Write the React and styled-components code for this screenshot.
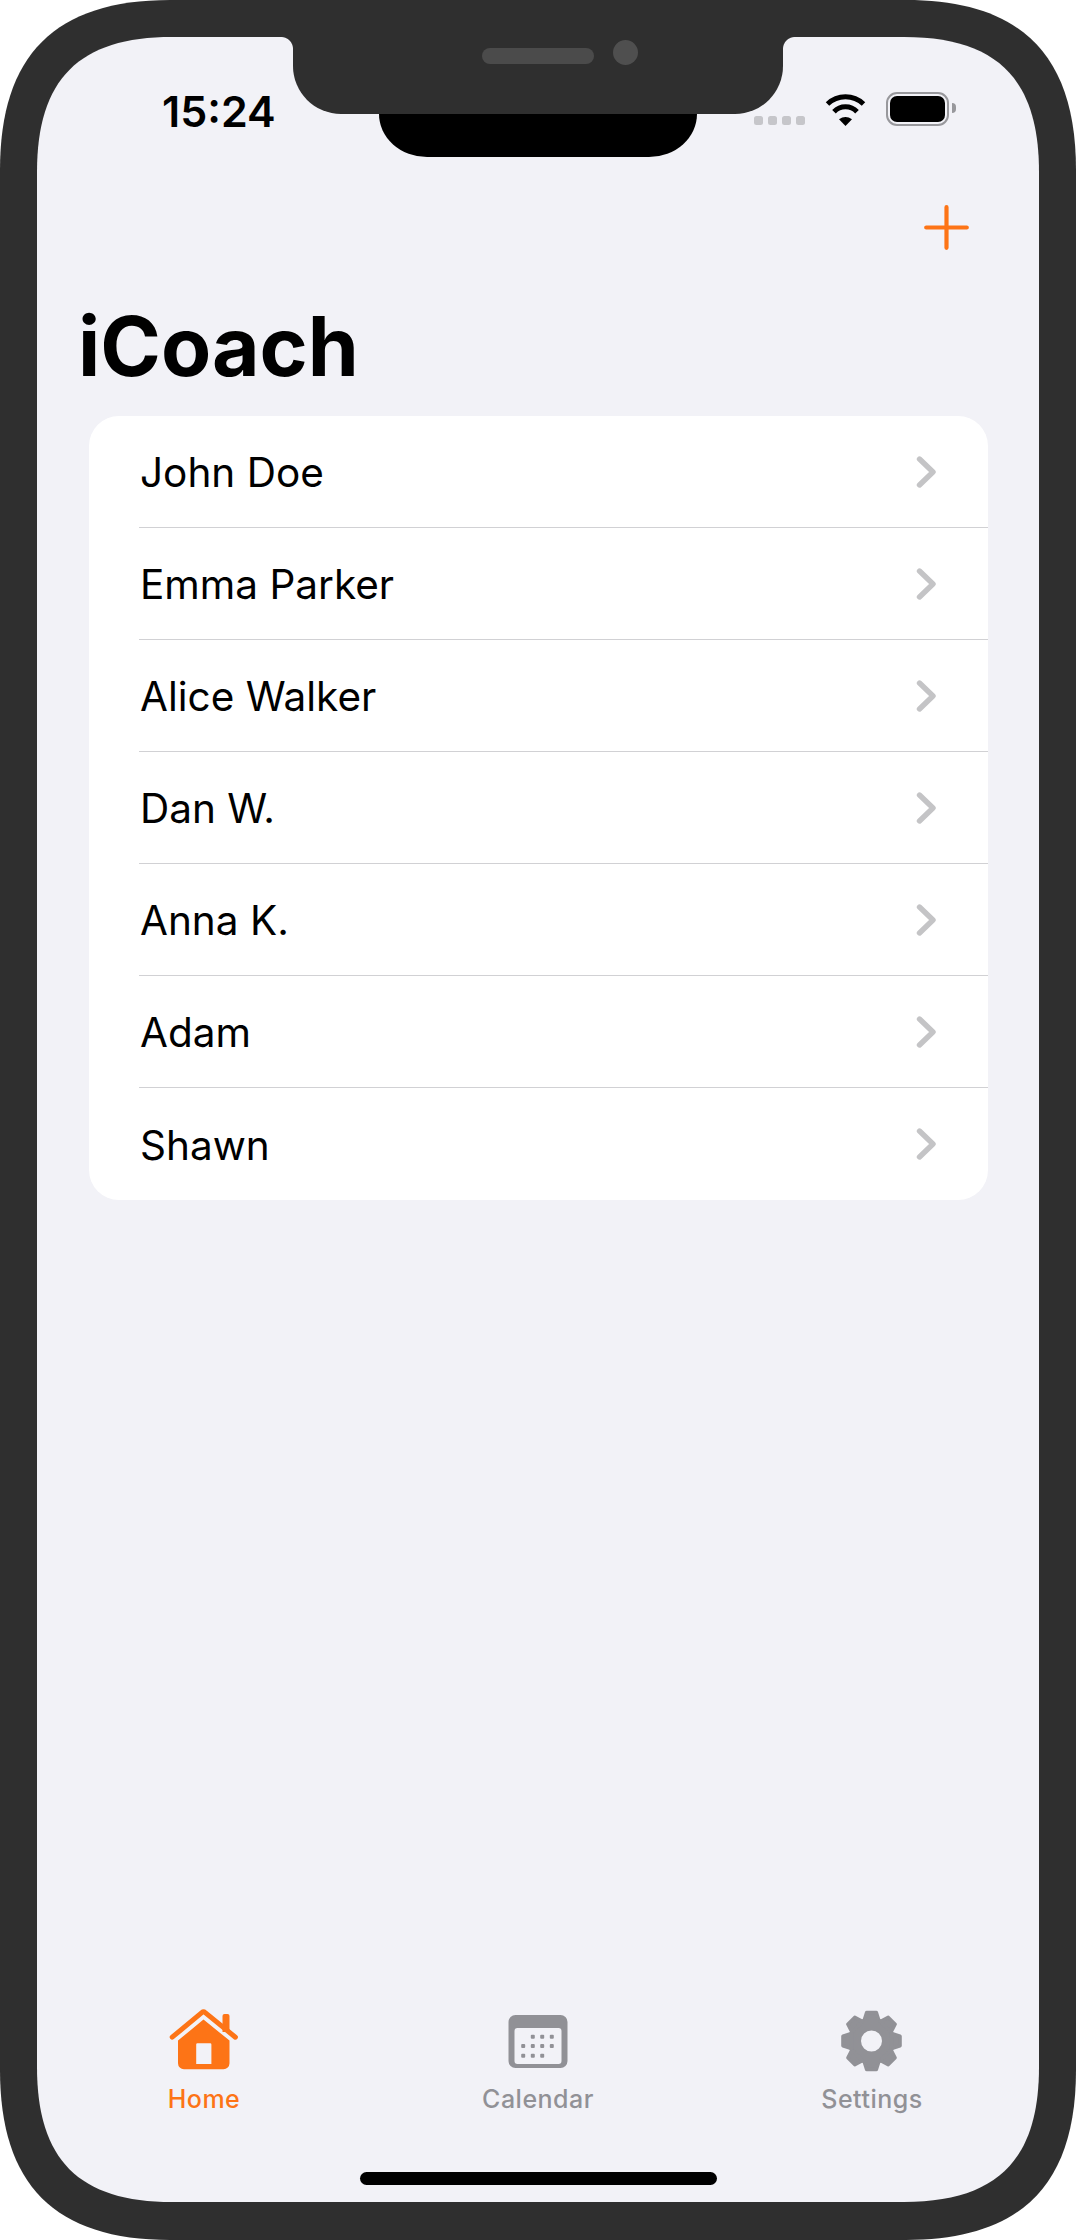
import React from 'react';
import styled, { createGlobalStyle } from 'styled-components';

const ORANGE = '#fd7416';
const GREY = '#919196';
const BG = '#f2f2f7';
const BEZEL = '#2f2f2f';
const FONT = 'Inter, "Liberation Sans", sans-serif';

const clients = ['John Doe', 'Emma Parker', 'Alice Walker', 'Dan W.', 'Anna K.', 'Adam', 'Shawn'];

// iPhone corners are not circular, so the two outlines are cut with one bezier per corner
const squircle = (w, h, l, c) =>
  `M0 ${l}C0 ${c} ${c} 0 ${l} 0H${w - l}C${w - c} 0 ${w} ${c} ${w} ${l}V${h - l}` +
  `C${w} ${h - c} ${w - c} ${h} ${w - l} ${h}H${l}C${c} ${h} 0 ${h - c} 0 ${h - l}Z`;

const Global = createGlobalStyle`
  html, body { margin: 0; padding: 0; background: #fff; }
  * { box-sizing: border-box; }
`;

const Phone = styled.div`
  width: 1076px;
  height: 2240px;
  padding: 37px 37px 38px;
  background: ${BEZEL};
  clip-path: path('${squircle(1076, 2240, 170, 55)}');
  font-family: ${FONT};
  color: #000;
`;

const Screen = styled.div`
  position: relative;
  height: 100%;
  display: flex;
  flex-direction: column;
  background: ${BG};
  clip-path: path('${squircle(1002, 2165, 135, 42)}');
`;

const Notch = styled.div`
  position: absolute;
  top: 0;
  left: 256px;
  width: 490px;
  height: 77px;
  display: flex;
  align-items: flex-start;
  gap: 19px;
  padding: 3px 0 0 189px;
  background: ${BEZEL};
  border-radius: 0 0 48px 48px;

  &::before,
  &::after {
    content: '';
    position: absolute;
    top: 0;
    width: 12px;
    height: 12px;
  }
  &::before {
    left: -12px;
    background: radial-gradient(circle at 0 100%, transparent 11.5px, ${BEZEL} 12.5px);
  }
  &::after {
    right: -12px;
    background: radial-gradient(circle at 100% 100%, transparent 11.5px, ${BEZEL} 12.5px);
  }
`;

const Sensor = styled.div`
  position: absolute;
  top: 100%;
  left: 86px;
  width: 318px;
  height: 43px;
  background: #000;
  border-radius: 0 0 48px 48px / 0 0 43px 43px;
`;

const Speaker = styled.div`
  width: 112px;
  height: 16px;
  margin-top: 8px;
  background: #4b4b4b;
  border-radius: 8px;
`;

const Camera = styled.div`
  width: 25px;
  height: 25px;
  background: #4f4f4f;
  border-radius: 50%;
`;

const StatusBar = styled.div`
  display: flex;
  justify-content: space-between;
  align-items: flex-end;
  height: 34px;
  margin-top: 55px;
  padding: 0 83px 0 125px;
`;

const Time = styled.div`
  font-size: 43px;
  font-weight: 600;
  line-height: 38px;
  margin-bottom: -4px;
`;

const StatusIcons = styled.div`
  display: flex;
  align-items: flex-end;
  gap: 19px;
`;

const Signal = styled.div`
  display: flex;
  gap: 5px;
  margin-bottom: 1px;
`;

const SignalDot = styled.span`
  width: 9px;
  height: 9px;
  background: #c6c6ca;
  border-radius: 2.5px;
`;

const Battery = styled.div`
  position: relative;
  width: 63px;
  height: 34px;
  margin-right: 7px;
  padding: 2px;
  border: 2.5px solid #98989c;
  border-radius: 11px;

  &::before {
    content: '';
    display: block;
    height: 100%;
    background: #000;
    border-radius: 7px;
  }
  &::after {
    content: '';
    position: absolute;
    top: 9px;
    right: -9px;
    width: 4px;
    height: 10px;
    background: #98989c;
    border-radius: 0 4px 4px 0;
  }
`;

const NavBar = styled.div`
  display: flex;
  justify-content: flex-end;
  margin-top: 79px;
  padding-right: 70px;
`;

const Title = styled.h1`
  margin: 47px 0 0;
  padding-left: 41px;
  font-size: 82px;
  font-weight: 700;
  line-height: 100px;
`;

const Card = styled.ul`
  list-style: none;
  margin: 19px 51px 0 52px;
  padding: 0 0 0 50px;
  background: #fff;
  border-radius: 30px;
`;

const Row = styled.li`
  display: flex;
  align-items: center;
  justify-content: space-between;
  height: 112px;
  padding: 0 52px 0 1px;
  font-size: 40.5px;
  border-bottom: 1px solid #d1d1d4;

  &:last-child {
    border-bottom: none;
  }
`;

const Name = styled.span`
  margin-top: 2px;
`;

const Spacer = styled.div`
  flex: 1;
`;

const TabBar = styled.nav`
  display: grid;
  grid-template-columns: repeat(3, 1fr);
`;

const Tab = styled.div`
  display: flex;
  flex-direction: column;
  align-items: center;
  gap: 10px;
  font-size: 25px;
  font-weight: 500;
  letter-spacing: 0.5px;
  line-height: 34px;
  color: ${(p) => (p.$active ? ORANGE : GREY)};
`;

const HomeBar = styled.div`
  width: 357px;
  height: 13px;
  margin: 56px auto 17px;
  background: #000;
  border-radius: 7px;
`;

const Wifi = () => (
  <svg width="43" height="32" viewBox="0 0 43 32">
    <g fill="none" stroke="#000" strokeWidth="5">
      <path d="M3.5 10A26 26 0 0 1 39.5 10" />
      <path d="M10 17.7A16 16 0 0 1 33 17.7" />
    </g>
    <path d="M15 25.3Q21.5 20.5 28 25.3L21.5 32Z" fill="#000" />
  </svg>
);

const Plus = () => (
  <svg width="45" height="45" viewBox="0 0 45 45" fill="none" stroke={ORANGE} strokeWidth="4.2" strokeLinecap="round">
    <path d="M22.5 2.2V42.8M2.2 22.5H42.8" />
  </svg>
);

const Chevron = () => (
  <svg width="20" height="32" viewBox="0 0 20 32" fill="none" stroke="#c4c4c6" strokeWidth="5.4" strokeLinecap="round" strokeLinejoin="round">
    <path d="M3.5 3L17 16L3.5 29" />
  </svg>
);

const HomeIcon = () => (
  <svg width="70" height="64" viewBox="0 0 70 64">
    <path d="M53.5 8a2 2 0 0 1 2-2h3a2 2 0 0 1 2 2v16h-7z" fill={ORANGE} />
    <path d="M3.2 29.2L32.8 4.6a2.6 2.6 0 0 1 3.4 0L66.4 29.2" fill="none" stroke={ORANGE} strokeWidth="5" strokeLinecap="round" strokeLinejoin="round" />
    <path
      fillRule="evenodd"
      fill={ORANGE}
      d="M34.5 11.5L60.5 32.6V55.2a6 6 0 0 1-6 6H15a6 6 0 0 1-6-6V32.6ZM28.4 35.2a1.2 1.2 0 0 0-1.2 1.2V56H42.4V36.4a1.2 1.2 0 0 0-1.2-1.2Z"
    />
  </svg>
);

const dotColumns = [14.7, 24.3, 33.7, 43.3];
const calendarDots = [
  [1, 2, 3],
  [0, 1, 2, 3],
  [0, 1, 2],
];
const dotRows = [21.7, 31, 40.7];

const CalendarIcon = () => (
  <svg width="70" height="64" viewBox="-5.5 -7 70 64">
    <path
      fillRule="evenodd"
      fill={GREY}
      d="M7 0H52a7 7 0 0 1 7 7V46a7 7 0 0 1-7 7H7a7 7 0 0 1-7-7V7a7 7 0 0 1 7-7ZM9 13a3 3 0 0 0-3 3V46a3 3 0 0 0 3 3H50a3 3 0 0 0 3-3V16a3 3 0 0 0-3-3Z"
    />
    {calendarDots.map((row, r) =>
      row.map((c) => (
        <rect key={`${r}-${c}`} x={dotColumns[c] - 2} y={dotRows[r] - 2} width="4" height="4" rx="1" fill={GREY} />
      ))
    )}
  </svg>
);

const teeth = [0, 45, 90, 135, 180, 225, 270, 315];

const GearIcon = () => (
  <svg width="70" height="64" viewBox="-34.5 -33 70 64">
    <circle r="17" fill="none" stroke={GREY} strokeWidth="13" />
    {teeth.map((deg) => (
      <path
        key={deg}
        transform={`rotate(${deg})`}
        d="M-7.5 -20L-4.8 -28.5H4.8L7.5 -20Z"
        fill={GREY}
        stroke={GREY}
        strokeWidth="3.6"
        strokeLinejoin="round"
      />
    ))}
  </svg>
);

const tabs = [
  { label: 'Home', icon: <HomeIcon />, active: true },
  { label: 'Calendar', icon: <CalendarIcon /> },
  { label: 'Settings', icon: <GearIcon /> },
];

export default function App() {
  return (
    <>
      <Global />
      <Phone>
        <Screen>
          <Notch>
            <Speaker />
            <Camera />
            <Sensor />
          </Notch>

          <StatusBar>
            <Time>15:24</Time>
            <StatusIcons>
              <Signal>
                <SignalDot />
                <SignalDot />
                <SignalDot />
                <SignalDot />
              </Signal>
              <Wifi />
              <Battery />
            </StatusIcons>
          </StatusBar>

          <NavBar>
            <Plus />
          </NavBar>
          <Title>iCoach</Title>

          <Card>
            {clients.map((name) => (
              <Row key={name}>
                <Name>{name}</Name>
                <Chevron />
              </Row>
            ))}
          </Card>

          <Spacer />

          <TabBar>
            {tabs.map((tab) => (
              <Tab key={tab.label} $active={tab.active}>
                {tab.icon}
                {tab.label}
              </Tab>
            ))}
          </TabBar>
          <HomeBar />
        </Screen>
      </Phone>
    </>
  );
}
